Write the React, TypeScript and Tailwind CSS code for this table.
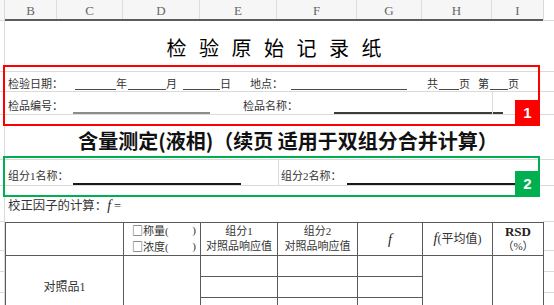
import type { ReactElement, ReactNode } from 'react';

const song = "font-['Liberation_Serif','Noto_Sans_CJK_SC',serif]";
const hei = "font-['Noto_Sans_CJK_SC',sans-serif]";

const columns = [
	{ label: 'B', w: 'w-[52px]' },
	{ label: 'C', w: 'w-[66px]' },
	{ label: 'D', w: 'w-[77px]' },
	{ label: 'E', w: 'w-[77px]' },
	{ label: 'F', w: 'w-[80px]' },
	{ label: 'G', w: 'w-[65px]' },
	{ label: 'H', w: 'w-[70px]' },
	{ label: 'I', w: 'w-[51px]' },
];

// one sheet row: row-number gutter, print area, right margin
function Row(args: {
	h: string;
	line?: boolean;
	className?: string;
	children?: ReactNode;
}): ReactElement {
	const line = args.line ?? true;
	return (
		<div className={`flex ${args.h}`}>
			<div className="w-[5px] shrink-0 border-r border-b border-[#dadada]" />
			<div
				className={`relative flex w-[538px] shrink-0 ${line ? 'border-b border-[#dadada]' : ''} ${args.className ?? ''}`}
			>
				{args.children}
			</div>
			<div className="flex-1 border-b border-[#dadada]" />
		</div>
	);
}

function Blank({ w, h = 'h-px', color = 'bg-[#4a4a4a]' }: { w: string; h?: string; color?: string }): ReactElement {
	return <span className={`${w} ${h} ${color} shrink-0`} />;
}

function T({ w, children, className }: { w?: string; children: ReactNode; className?: string }): ReactElement {
	return <span className={`${w ?? ''} shrink-0 whitespace-nowrap leading-[12px] ${className ?? ''}`}>{children}</span>;
}

function Badge({ n, color }: { n: string; color: string }): ReactElement {
	return (
		<div
			className={`absolute -right-[2px] -bottom-[2px] flex w-[25px] h-[26px] items-center justify-center ${color} text-white text-[15px] font-bold font-['Liberation_Sans',sans-serif]`}
		>
			{n}
		</div>
	);
}

export default function App(): ReactElement {
	return (
		<div className={`relative w-[554px] h-[305px] overflow-hidden bg-white text-[11px] text-[#333] ${song}`}>
			{/* column letters */}
			<div className="flex h-[21px] bg-[#f6f6f6]">
				<div className="w-[5px] shrink-0 border-r border-b border-[#dadada]" />
				<div className="flex w-[538px] shrink-0 border-b-2 border-[#5c5c5c]">
					{columns.map((c, i) => (
						<div
							key={c.label}
							className={`${c.w} flex items-center justify-center pt-[2px] text-[13px] text-[#666] ${i < columns.length - 1 ? 'border-r border-[#dedede]' : ''}`}
						>
							{c.label}
						</div>
					))}
				</div>
				<div className="flex-1 border-l border-b border-[#dadada] bg-white" />
			</div>

			<Row h="h-[51px]" className="items-center justify-center pt-[4px] pl-[4px]">
				<span className={`${hei} text-[20px] text-black tracking-[4px] leading-none`}>
					检 验 原 始 记 录 纸
				</span>
			</Row>

			<Row h="h-[20px]" className="items-end pb-[1px]">
				<T w="w-[67px] ml-[3px]">检验日期：</T>
				<Blank w="w-[41px]" />
				<T w="w-[12px]">年</T>
				<Blank w="w-[38px]" />
				<T w="w-[12px]">月</T>
				<span className="w-[5px]" />
				<Blank w="w-[37px]" />
				<T w="w-[12px]">日</T>
				<span className="w-[18px]" />
				<T w="w-[41px]">地点：</T>
				<Blank w="w-[116px]" />
				<span className="w-[20px]" />
				<T w="w-[12px]">共</T>
				<Blank w="w-[20px]" />
				<T w="w-[12px]">页</T>
				<span className="w-[7px]" />
				<T w="w-[12px]">第</T>
				<Blank w="w-[18px]" />
				<T w="w-[12px]">页</T>
			</Row>

			<Row h="h-[23px]" className="items-end">
				<div className="absolute left-[487px] top-0 bottom-0 w-px bg-[#dadada]" />
				<T w="w-[65px] ml-[3px]" className="mb-[2px]">检品编号：</T>
				<Blank w="w-[137px]" h="h-[2px]" color="bg-[#8c8c8c]" />
				<span className="w-[33px]" />
				<T w="w-[91px]" className="mb-[2px]">检品名称：</T>
				<Blank w="w-[169px]" h="h-[2px]" color="bg-[#3c3c3c]" />
			</Row>

			<Row h="h-[45px]" className="items-center justify-center pt-[7px] pl-[28px]">
				<span className={`${hei} text-[20px] font-bold text-[#111] leading-none`}>
					含量测定(液相)（续页 适用于双组分合并计算）
				</span>
			</Row>

			<Row h="h-[26px]" className="items-end">
				<div className="absolute left-[273px] top-0 bottom-0 w-px bg-[#dadada]" />
				<T w="w-[65px] ml-[3px]" className="mb-[3px]">组分1名称：</T>
				<Blank w="w-[168px]" h="h-[2px]" color="bg-[#1a1a1a]" />
				<span className="w-[40px]" />
				<T w="w-[66px]" className="mb-[3px]">组分2名称：</T>
				<Blank w="w-[170px]" h="h-[2px]" color="bg-[#1a1a1a]" />
			</Row>

			<Row h="h-[36px]" line={false} className="items-center pt-[3px]">
				<T className="ml-[3px] text-[12.4px]">
					校正因子的计算：<i className="text-[14px] text-[#222]">f</i> =
				</T>
			</Row>

			{/* data table */}
			<div className="flex">
				<div className="flex w-[5px] shrink-0 flex-col border-r border-[#dadada]">
					<div className="h-[29px] border-b border-[#dadada]" />
					<div className="h-[21px] border-b border-[#dadada]" />
					<div className="h-[21px] border-b border-[#dadada]" />
					<div className="h-[21px] border-b border-[#dadada]" />
				</div>
				<table className="w-[538px] shrink-0 table-fixed border-collapse text-center leading-[15px]">
					<colgroup>
						<col className="w-[118px]" />
						<col className="w-[77px]" />
						<col className="w-[77px]" />
						<col className="w-[80px]" />
						<col className="w-[65px]" />
						<col className="w-[70px]" />
						<col className="w-[51px]" />
					</colgroup>
					<tbody>
						<tr className="h-[29px]">
							<td className="border border-[#5a5a5a]" />
							<td className="border border-[#5a5a5a] p-0 pl-[8px] text-left">
								<div className="flex w-[64px] justify-between">
									<span>
										<span className={hei}>□</span>称量(
									</span>
									<span>)</span>
								</div>
								<div className="flex w-[64px] justify-between">
									<span>
										<span className={hei}>□</span>浓度(
									</span>
									<span>)</span>
								</div>
							</td>
							<td className="border border-[#5a5a5a] p-0">
								<div>组分1</div>
								<div>对照品响应值</div>
							</td>
							<td className="border border-[#5a5a5a] p-0">
								<div>组分2</div>
								<div>对照品响应值</div>
							</td>
							<td className="border border-[#5a5a5a] p-0 text-[14px] italic text-[#222]">f</td>
							<td className="border border-[#5a5a5a] p-0 text-[12px]">
								<i className="text-[14px] text-[#222]">f</i>(平均值)
							</td>
							<td className="border border-[#5a5a5a] p-0">
								<div className="text-[13px] font-bold text-[#222]">RSD</div>
								<div>（%）</div>
							</td>
						</tr>
						<tr className="h-[21px]">
							<td rowSpan={3} className="border border-[#5a5a5a] text-[12px]">
								对照品1
							</td>
							<td rowSpan={3} className="border border-[#5a5a5a]" />
							<td className="border border-[#5a5a5a]" />
							<td className="border border-[#5a5a5a]" />
							<td className="border border-[#5a5a5a]" />
							<td rowSpan={3} className="border border-[#5a5a5a]" />
							<td rowSpan={3} className="border border-[#5a5a5a]" />
						</tr>
						<tr className="h-[21px]">
							<td className="border border-[#5a5a5a]" />
							<td className="border border-[#5a5a5a]" />
							<td className="border border-[#5a5a5a]" />
						</tr>
						<tr className="h-[21px]">
							<td className="border border-[#5a5a5a]" />
							<td className="border border-[#5a5a5a]" />
							<td className="border border-[#5a5a5a]" />
						</tr>
					</tbody>
				</table>
				<div className="flex flex-1 flex-col">
					<div className="h-[29px] border-b border-[#dadada]" />
					<div className="h-[21px] border-b border-[#dadada]" />
					<div className="h-[21px] border-b border-[#dadada]" />
					<div className="h-[21px] border-b border-[#dadada]" />
				</div>
			</div>

			{/* annotation boxes */}
			<div className="absolute left-[3px] top-[65px] w-[537px] h-[61px] border-2 border-[#ff0000]">
				<Badge n="1" color="bg-[#ff0000]" />
			</div>
			<div className="absolute left-[3px] top-[156px] w-[537px] h-[41px] border-2 border-[#00b050]">
				<Badge n="2" color="bg-[#00b050]" />
			</div>
		</div>
	);
}
